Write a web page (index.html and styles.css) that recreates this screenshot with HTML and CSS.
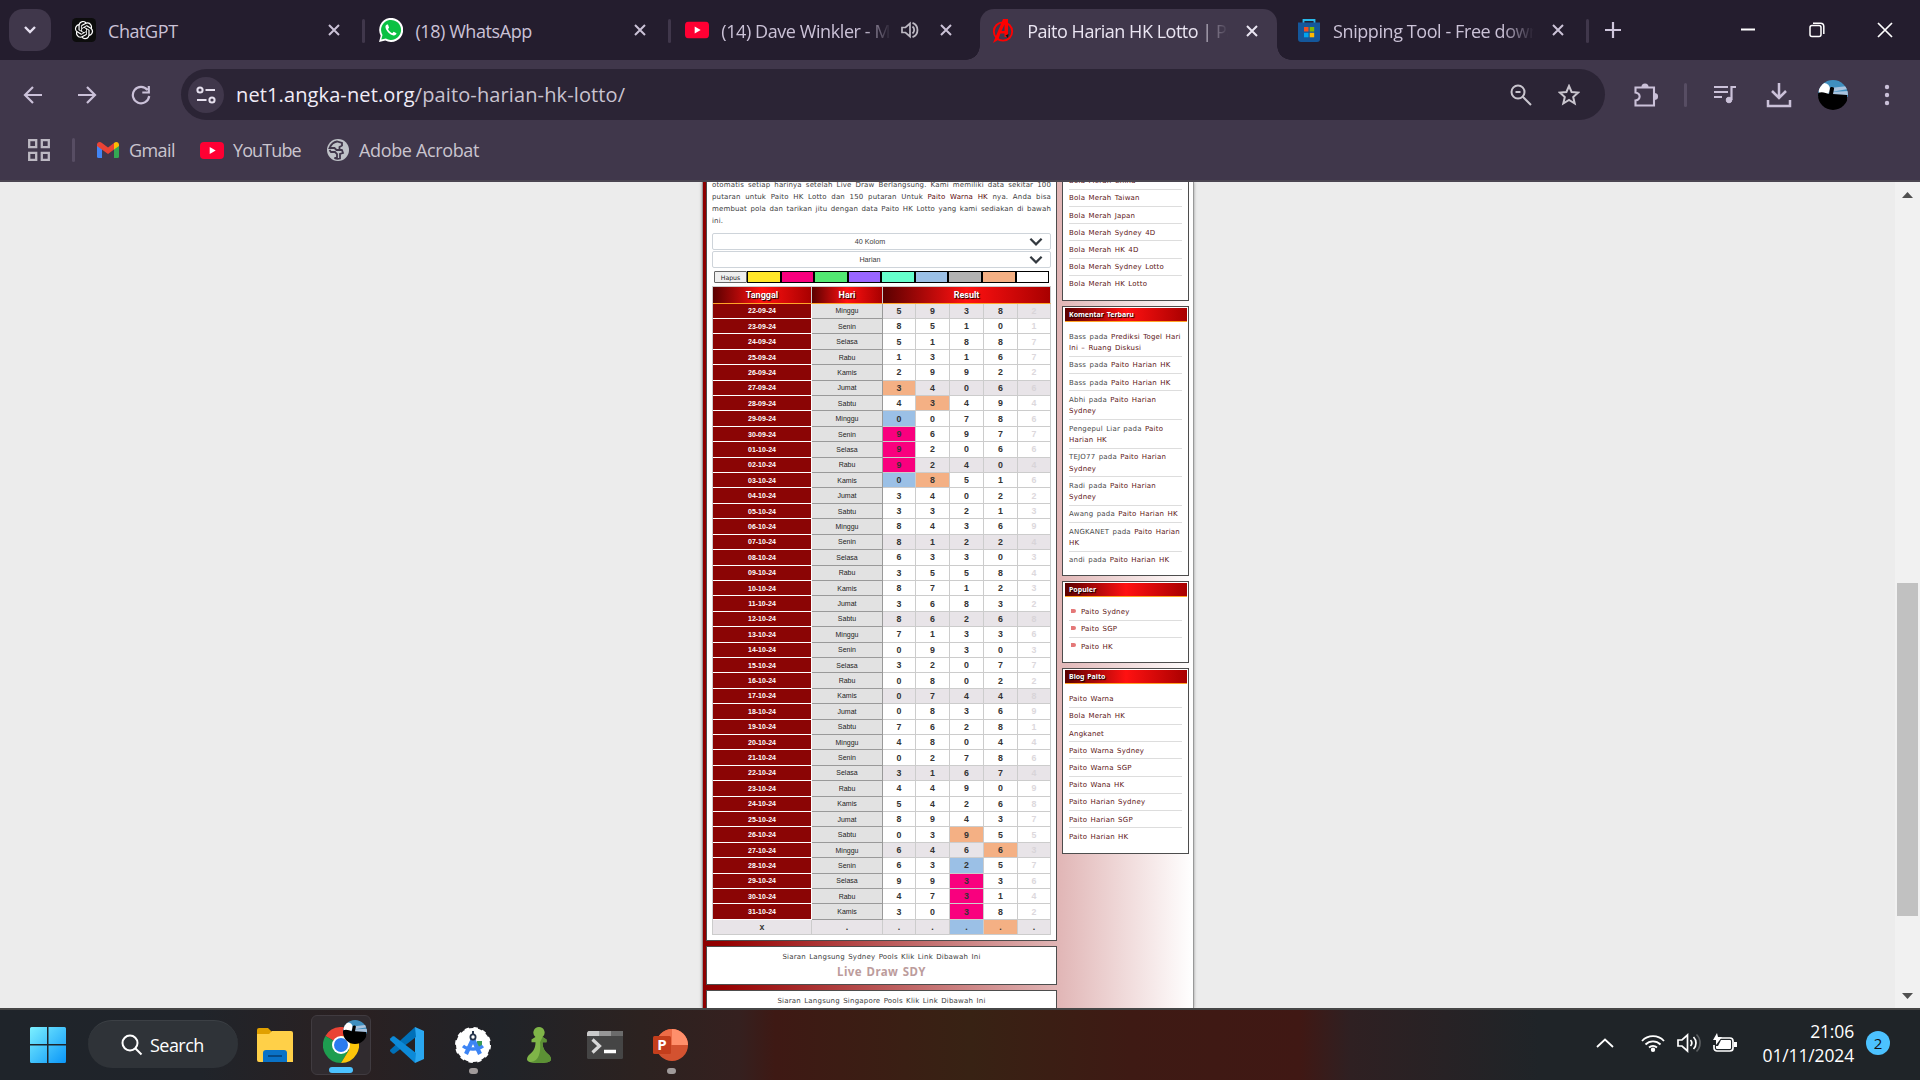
FILE: index.html
```html
<!DOCTYPE html>
<html lang="id">
<head>
<meta charset="utf-8">
<title>Paito Harian HK Lotto</title>
<link rel="stylesheet" href="styles.css">
</head>
<body>
<svg class="defs" width="0" height="0">
  <defs>
    <symbol id="x" viewBox="0 0 14 14"><path d="M2 2l10 10M12 2L2 12" fill="none" stroke="currentColor" stroke-width="2"/></symbol>
    <symbol id="yt" viewBox="0 0 24 17"><rect width="24" height="17" rx="4" fill="#ff0033"/><path d="M9.700 5v7l6-3.500z" fill="#fff"/></symbol>
    <symbol id="chev" viewBox="0 0 12 8"><path d="M1 1.500l5 5 5-5" fill="none" stroke="#343a40" stroke-width="2"/></symbol>
    <symbol id="avatar" viewBox="0 0 30 30"><clipPath id="ac"><circle cx="15" cy="15" r="15"/></clipPath><g clip-path="url(#ac)"><path fill="#3f8fbf" d="M0 0h30v17H0z"/><path fill="#a9c3de" d="M12 8l18-2v3l-17 3 17-1v4H10z"/><circle cx="6" cy="9" r="6" fill="#fff"/><path fill="#000" d="M0 13c4-2 8 0 11 1l1-6c1-2 5-1 4 1l-1 5 14 1v15H0z"/></g></symbol>
  </defs>
</svg>
<header class="browser">
  <div class="tabstrip">
    <div class="tabsearch"><svg width="14" height="10" viewBox="0 0 14 10"><path d="M2 2l5 5 5-5" fill="none" stroke="#e6e0f0" stroke-width="2.400"/></svg></div>
    <div class="tab">
      <svg class="ico" viewBox="0 0 24 24"><rect width="24" height="24" rx="4.500" fill="#0d0d0d"/><path transform="translate(2.900 2.900) scale(.76)" fill="#fff" d="M22.2819 9.8211a5.9847 5.9847 0 0 0-.5157-4.9108 6.0462 6.0462 0 0 0-6.5098-2.9A6.0651 6.0651 0 0 0 4.9807 4.1818a5.9847 5.9847 0 0 0-3.9977 2.9 6.0462 6.0462 0 0 0 .7427 7.0966 5.98 5.98 0 0 0 .511 4.9107 6.051 6.051 0 0 0 6.5146 2.9001A5.9847 5.9847 0 0 0 13.2599 24a6.0557 6.0557 0 0 0 5.7718-4.2058 5.9894 5.9894 0 0 0 3.9977-2.9001 6.0557 6.0557 0 0 0-.7475-7.0729zm-9.022 12.6081a4.4755 4.4755 0 0 1-2.8764-1.0408l.1419-.0804 4.7783-2.7582a.7948.7948 0 0 0 .3927-.6813v-6.7369l2.02 1.1686a.071.071 0 0 1 .038.052v5.5826a4.504 4.504 0 0 1-4.4945 4.4944zm-9.6607-4.1254a4.4708 4.4708 0 0 1-.5346-3.0137l.142.0852 4.783 2.7582a.7712.7712 0 0 0 .7806 0l5.8428-3.3685v2.3324a.0804.0804 0 0 1-.0332.0615L9.74 19.9502a4.4992 4.4992 0 0 1-6.1408-1.6464zM2.3408 7.8956a4.485 4.485 0 0 1 2.3655-1.9728V11.6a.7664.7664 0 0 0 .3879.6765l5.8144 3.3543-2.0201 1.1685a.0757.0757 0 0 1-.071 0l-4.8303-2.7865A4.504 4.504 0 0 1 2.3408 7.872zm16.5963 3.8558L13.1038 8.364 15.1192 7.2a.0757.0757 0 0 1 .071 0l4.8303 2.7913a4.4944 4.4944 0 0 1-.6765 8.1042v-5.6772a.79.79 0 0 0-.407-.667zm2.0107-3.0231l-.142-.0852-4.7735-2.7818a.7759.7759 0 0 0-.7854 0L9.409 9.2297V6.8974a.0662.0662 0 0 1 .0284-.0615l4.8303-2.7866a4.4992 4.4992 0 0 1 6.6802 4.66zM8.3065 12.863l-2.02-1.1638a.0804.0804 0 0 1-.038-.0567V6.0742a4.4992 4.4992 0 0 1 7.3757-3.4537l-.142.0805L8.704 5.459a.7948.7948 0 0 0-.3927.6813zm1.0976-2.3654l2.602-1.4998 2.6069 1.4998v2.9994l-2.5974 1.4997-2.6067-1.4997Z"/></svg>
      <span class="label">ChatGPT</span><svg class="close"><use href="#x"/></svg><i class="sep"></i>
    </div>
    <div class="tab">
      <svg class="ico" viewBox="0 0 24 24"><path d="M0 24l1.700-6.200A12 12 0 1 1 6.300 22.400z" fill="#fff"/><path d="M2.300 21.600l1.200-4.500a10 10 0 1 1 3.400 3.400z" fill="#0ac143"/><path d="M8 6.500c-1 .4-1.800 1.500-1.500 3 .6 3.400 4.300 7.300 8 7.900 1.500.2 2.800-.8 3-2.200l-2.900-1.500-1.300 1.500c-1.900-.8-3.400-2.200-4.300-4.200l1.100-1.300L9 6.600z" fill="#fff"/></svg>
      <span class="label">(18) WhatsApp</span><svg class="close"><use href="#x"/></svg><i class="sep"></i>
    </div>
    <div class="tab">
      <svg class="ico"><use href="#yt" width="24" height="17" y="3.500"/></svg>
      <span class="label fade">(14) Dave Winkler - Music</span>
      <svg class="sound" viewBox="0 0 18 18"><path d="M1 6.500h3.500L9 2.500v13l-4.500-4H1z" fill="none" stroke="#bdb9c3" stroke-width="1.700"/><path d="M11.500 5.500a4.500 4.500 0 0 1 0 7M11.500 1.800a7.700 7.700 0 0 1 0 14.400" fill="none" stroke="#bdb9c3" stroke-width="1.800"/></svg>
      <svg class="close"><use href="#x"/></svg>
    </div>
    <div class="tab active">
      <svg class="ico" viewBox="0 0 24 24"><circle cx="12" cy="12.500" r="9.200" fill="none" stroke="#f00" stroke-width="1.800"/><path d="M2 24L12 0h5v18h-3.500v-3.500h-4L7 21z" fill="#f00"/><path d="M10.500 12h3V5.500z" fill="#40374b"/><path d="M14.500 16.500l3-1.500-.5 4z" fill="#111"/></svg>
      <span class="label fade">Paito Harian HK Lotto | Paito</span><svg class="close"><use href="#x"/></svg>
    </div>
    <div class="tab">
      <svg class="ico" viewBox="0 0 24 24"><path d="M6.500 6V2h11v4" fill="none" stroke="#28b8ea" stroke-width="1.800"/><path d="M1 4.500h22V21a3 3 0 0 1-3 3H4a3 3 0 0 1-3-3z" fill="#14579b"/><path d="M7 9h4.500v4.500H7z" fill="#f25022"/><path d="M12.700 9h4.500v4.500h-4.500z" fill="#7fba00"/><path d="M7 14.800h4.500v4.500H7z" fill="#00a4ef"/><path d="M12.700 14.800h4.500v4.500h-4.500z" fill="#ffb900"/></svg>
      <span class="label fade">Snipping Tool - Free download</span><svg class="close"><use href="#x"/></svg><i class="sep"></i>
    </div>
    <svg class="newtab" viewBox="0 0 16 16"><path d="M8 0v16M0 8h16" stroke="#cfc6dc" stroke-width="2.200"/></svg>
    <div class="winctl">
      <svg width="16" height="16" viewBox="0 0 16 16"><path d="M1 7.500h14" stroke="#fff" stroke-width="2"/></svg>
      <svg width="16" height="16" viewBox="0 0 16 16" fill="none" stroke="#fff" stroke-width="1.500"><rect x="1" y="3.500" width="11" height="11" rx="2"/><path d="M4 1.200h7.500a3.300 3.300 0 0 1 3.300 3.300V12"/></svg>
      <svg width="16" height="16" viewBox="0 0 16 16"><path d="M1 1l14 14M15 1L1 15" stroke="#fff" stroke-width="1.700"/></svg>
    </div>
  </div>
  <div class="toolbar">
    <svg class="nav" viewBox="0 0 20 20"><path d="M19 10H2M10 2l-8 8 8 8"/></svg>
    <svg class="nav" viewBox="0 0 20 20"><path d="M1 10h17M10 2l8 8-8 8"/></svg>
    <svg class="nav" viewBox="0 0 20 20"><path d="M16.500 5A8.200 8.200 0 1 0 18.200 11M17.800 1v6.500h-6.500"/></svg>
    <div class="omnibox">
      <div class="siteinfo"><svg width="20" height="20" viewBox="0 0 20 20" fill="none" stroke="#e6e0ee" stroke-width="2"><circle cx="4" cy="5" r="2.600"/><path d="M9.500 5H19M1 15h9.500"/><circle cx="16" cy="15" r="2.600"/></svg></div>
      <span class="url"><b>net1.angka-net.org</b>/paito-harian-hk-lotto/</span>
      <svg class="oi" viewBox="0 0 22 22"><circle cx="8" cy="8" r="6.500"/><path d="M12.800 12.800L21 21M5.500 8h5"/></svg>
      <svg class="oi" viewBox="0 0 22 22"><path d="M11 2l2.600 6 6.600.6-5 4.400 1.500 6.500L11 16l-5.700 3.500L6.800 13l-5-4.400L8.400 8z"/></svg>
    </div>
    <div class="actions">
      <svg width="24" height="24" viewBox="0 0 24 24" fill="none" stroke="#cbc1d9" stroke-width="2.100"><path d="M1.500 4.500H20v18H1.500v-5c5.500-1 5.500-7 0-8z"/><path d="M8.500 4a2.500 2.500 0 0 1 5 0M20.500 11a2.500 2.500 0 0 1 0 5" fill="#cbc1d9"/></svg>
      <i class="sep"></i>
      <svg width="24" height="24" viewBox="0 0 24 24" fill="none" stroke="#cbc1d9" stroke-width="2.200"><path d="M1 4h14M1 9h14M1 14h8M23 4h-4.500v13"/><circle cx="16" cy="17" r="2.800" fill="#cbc1d9" stroke-width="1"/></svg>
      <svg class="dl" width="26" height="26" viewBox="0 0 26 26" fill="none" stroke="#cbc1d9" stroke-width="2.500"><path d="M13 1v14M6 9l7 7 7-7M2 18v6h22v-6"/></svg>
      <svg width="30" height="30"><use href="#avatar"/></svg>
      <svg class="dots" width="6" height="24" viewBox="0 0 6 24" fill="#cbc1d9"><circle cx="3" cy="4" r="2.200"/><circle cx="3" cy="12" r="2.200"/><circle cx="3" cy="20" r="2.200"/></svg>
    </div>
  </div>
  <nav class="bookmarks">
    <svg width="22" height="22" viewBox="0 0 22 22" fill="none" stroke="#bdb9c3" stroke-width="2.300"><path d="M1.200 1.200h7v7h-7zM13.800 1.200h7v7h-7zM1.200 13.800h7v7h-7zM13.800 13.800h7v7h-7z"/></svg>
    <i class="sep"></i>
    <a class="bm gmail"><svg width="22" height="16" viewBox="0 0 22 16"><path d="M0 2v12.500A1.500 1.500 0 0 0 1.500 16H5V6z" fill="#4285f4"/><path d="M17 6v10h3.500a1.500 1.500 0 0 0 1.500-1.500V2z" fill="#34a853"/><path d="M0 3c0-3 3-3.700 5-2l6 4.500L17 1v6.500L11 12 0 4z" fill="#ea4335"/><path d="M17 1c2-1.700 5-1 5 2v1l-5 3.500z" fill="#fbbc04"/></svg>Gmail</a>
    <a class="bm you"><svg width="24" height="17"><use href="#yt"/></svg>YouTube</a>
    <a class="bm adobe"><svg width="22" height="22" viewBox="0 0 22 22"><circle cx="11" cy="11" r="11" fill="#bfc2c8"/><path d="M10 2.500c-3 .5-6 3-7.500 6.500h5l2 2h3V8l2.500-1.500V4zM12 10.500l3 .5 1 3-3 1v4.500c-2 .5-4 .3-5.500-.5H10v-4l-2-2H4l-1.500-2" fill="none" stroke="#40374b" stroke-width="1.800"/></svg>Adobe Acrobat</a>
  </nav>
</header>
<main class="viewport">
  <div class="page">
    <div class="content">
      <section class="panel main">
        <div class="intro">
          <p>otomatis setiap harinya setelah Live Draw Berlangsung. Kami memiliki data sekitar 100</p>
          <p>putaran untuk Paito HK Lotto dan 150 putaran Untuk <a>Paito Warna HK</a> nya. Anda bisa</p>
          <p>membuat pola dan tarikan jitu dengan data Paito HK Lotto yang kami sediakan di bawah</p>
          <p class="last">ini.</p>
        </div>
        <div class="select"><span>40 Kolom</span><svg width="14" height="9"><use href="#chev"/></svg></div>
        <div class="select"><span>Harian</span><svg width="14" height="9"><use href="#chev"/></svg></div>
        <div class="palette"><button>Hapus</button><i class="yellow"></i><i class="pink"></i><i class="green"></i><i class="purple"></i><i class="mint"></i><i class="blue"></i><i class="gray"></i><i class="orange"></i><i></i></div>
        <table class="draws">
          <thead><tr><th>Tanggal</th><th>Hari</th><th>Result</th></tr></thead>
          <tbody>
            <tr class="alt"><th>22-09-24</th><td>Minggu</td><td>5</td><td>9</td><td>3</td><td>8</td><td>2</td></tr>
            <tr><th>23-09-24</th><td>Senin</td><td>8</td><td>5</td><td>1</td><td>0</td><td>1</td></tr>
            <tr><th>24-09-24</th><td>Selasa</td><td>5</td><td>1</td><td>8</td><td>8</td><td>7</td></tr>
            <tr><th>25-09-24</th><td>Rabu</td><td>1</td><td>3</td><td>1</td><td>6</td><td>7</td></tr>
            <tr><th>26-09-24</th><td>Kamis</td><td>2</td><td>9</td><td>9</td><td>2</td><td>2</td></tr>
            <tr class="alt"><th>27-09-24</th><td>Jumat</td><td class="orange">3</td><td>4</td><td>0</td><td>6</td><td>6</td></tr>
            <tr><th>28-09-24</th><td>Sabtu</td><td>4</td><td class="orange">3</td><td>4</td><td>9</td><td>4</td></tr>
            <tr><th>29-09-24</th><td>Minggu</td><td class="blue">0</td><td>0</td><td>7</td><td>8</td><td>6</td></tr>
            <tr><th>30-09-24</th><td>Senin</td><td class="pink">9</td><td>6</td><td>9</td><td>7</td><td>7</td></tr>
            <tr><th>01-10-24</th><td>Selasa</td><td class="pink">9</td><td>2</td><td>0</td><td>6</td><td>6</td></tr>
            <tr class="alt"><th>02-10-24</th><td>Rabu</td><td class="pink">9</td><td>2</td><td>4</td><td>0</td><td>4</td></tr>
            <tr><th>03-10-24</th><td>Kamis</td><td class="blue">0</td><td class="orange">8</td><td>5</td><td>1</td><td>6</td></tr>
            <tr><th>04-10-24</th><td>Jumat</td><td>3</td><td>4</td><td>0</td><td>2</td><td>2</td></tr>
            <tr><th>05-10-24</th><td>Sabtu</td><td>3</td><td>3</td><td>2</td><td>1</td><td>3</td></tr>
            <tr><th>06-10-24</th><td>Minggu</td><td>8</td><td>4</td><td>3</td><td>6</td><td>9</td></tr>
            <tr class="alt"><th>07-10-24</th><td>Senin</td><td>8</td><td>1</td><td>2</td><td>2</td><td>4</td></tr>
            <tr><th>08-10-24</th><td>Selasa</td><td>6</td><td>3</td><td>3</td><td>0</td><td>3</td></tr>
            <tr><th>09-10-24</th><td>Rabu</td><td>3</td><td>5</td><td>5</td><td>8</td><td>4</td></tr>
            <tr><th>10-10-24</th><td>Kamis</td><td>8</td><td>7</td><td>1</td><td>2</td><td>3</td></tr>
            <tr><th>11-10-24</th><td>Jumat</td><td>3</td><td>6</td><td>8</td><td>3</td><td>2</td></tr>
            <tr class="alt"><th>12-10-24</th><td>Sabtu</td><td>8</td><td>6</td><td>2</td><td>6</td><td>8</td></tr>
            <tr><th>13-10-24</th><td>Minggu</td><td>7</td><td>1</td><td>3</td><td>3</td><td>6</td></tr>
            <tr><th>14-10-24</th><td>Senin</td><td>0</td><td>9</td><td>3</td><td>0</td><td>3</td></tr>
            <tr><th>15-10-24</th><td>Selasa</td><td>3</td><td>2</td><td>0</td><td>7</td><td>7</td></tr>
            <tr><th>16-10-24</th><td>Rabu</td><td>0</td><td>8</td><td>0</td><td>2</td><td>2</td></tr>
            <tr class="alt"><th>17-10-24</th><td>Kamis</td><td>0</td><td>7</td><td>4</td><td>4</td><td>8</td></tr>
            <tr><th>18-10-24</th><td>Jumat</td><td>0</td><td>8</td><td>3</td><td>6</td><td>9</td></tr>
            <tr><th>19-10-24</th><td>Sabtu</td><td>7</td><td>6</td><td>2</td><td>8</td><td>1</td></tr>
            <tr><th>20-10-24</th><td>Minggu</td><td>4</td><td>8</td><td>0</td><td>4</td><td>4</td></tr>
            <tr><th>21-10-24</th><td>Senin</td><td>0</td><td>2</td><td>7</td><td>8</td><td>6</td></tr>
            <tr class="alt"><th>22-10-24</th><td>Selasa</td><td>3</td><td>1</td><td>6</td><td>7</td><td>4</td></tr>
            <tr><th>23-10-24</th><td>Rabu</td><td>4</td><td>4</td><td>9</td><td>0</td><td>9</td></tr>
            <tr><th>24-10-24</th><td>Kamis</td><td>5</td><td>4</td><td>2</td><td>6</td><td>8</td></tr>
            <tr><th>25-10-24</th><td>Jumat</td><td>8</td><td>9</td><td>4</td><td>3</td><td>7</td></tr>
            <tr><th>26-10-24</th><td>Sabtu</td><td>0</td><td>3</td><td class="orange">9</td><td>5</td><td>5</td></tr>
            <tr class="alt"><th>27-10-24</th><td>Minggu</td><td>6</td><td>4</td><td>6</td><td class="orange">6</td><td>3</td></tr>
            <tr><th>28-10-24</th><td>Senin</td><td>6</td><td>3</td><td class="blue">2</td><td>5</td><td>7</td></tr>
            <tr><th>29-10-24</th><td>Selasa</td><td>9</td><td>9</td><td class="pink">3</td><td>3</td><td>6</td></tr>
            <tr><th>30-10-24</th><td>Rabu</td><td>4</td><td>7</td><td class="pink">3</td><td>1</td><td>4</td></tr>
            <tr><th>31-10-24</th><td>Kamis</td><td>3</td><td>0</td><td class="pink">3</td><td>8</td><td>2</td></tr>
            <tr class="alt next"><td>x</td><td>.</td><td>.</td><td>.</td><td class="blue">.</td><td class="orange">.</td><td>.</td></tr>
          </tbody>
        </table>
      </section>
      <section class="panel live"><p>Siaran Langsung Sydney Pools Klik Link Dibawah Ini</p><a>Live Draw SDY</a></section>
      <section class="panel live"><p>Siaran Langsung Singapore Pools Klik Link Dibawah Ini</p></section>
    </div>
    <aside class="sidebar">
      <section class="panel box first">
        <ul><li>Bola Merah China</li><li>Bola Merah Taiwan</li><li>Bola Merah Japan</li><li>Bola Merah Sydney 4D</li><li>Bola Merah HK 4D</li><li>Bola Merah Sydney Lotto</li><li>Bola Merah HK Lotto</li></ul>
      </section>
      <section class="panel box comments"><h3>Komentar Terbaru</h3>
        <ul><li><s>Bass pada</s> Prediksi Togel Hari<br>Ini – Ruang Diskusi</li><li><s>Bass pada</s> Paito Harian HK</li><li><s>Bass pada</s> Paito Harian HK</li><li><s>Abhi pada</s> Paito Harian<br>Sydney</li><li><s>Pengepul Liar pada</s> Paito<br>Harian HK</li><li><s>TEJO77 pada</s> Paito Harian<br>Sydney</li><li><s>Radi pada</s> Paito Harian<br>Sydney</li><li><s>Awang pada</s> Paito Harian HK</li><li><s>ANGKANET pada</s> Paito Harian<br>HK</li><li><s>andi pada</s> Paito Harian HK</li></ul>
      </section>
      <section class="panel box popular"><h3>Populer</h3>
        <ul><li>Paito Sydney</li><li>Paito SGP</li><li>Paito HK</li></ul>
      </section>
      <section class="panel box blog"><h3>Blog Paito</h3>
        <ul><li>Paito Warna</li><li>Bola Merah HK</li><li>Angkanet</li><li>Paito Warna Sydney</li><li>Paito Warna SGP</li><li>Paito Wana HK</li><li>Paito Harian Sydney</li><li>Paito Harian SGP</li><li>Paito Harian HK</li></ul>
      </section>
    </aside>
  </div>
  <div class="scrollbar">
    <svg width="11" height="6" viewBox="0 0 11 6"><path d="M5.500 0L11 6H0z" fill="#505050"/></svg>
    <i></i>
    <svg width="11" height="6" viewBox="0 0 11 6"><path d="M0 0h11L5.500 6z" fill="#505050"/></svg>
  </div>
</main>
<footer class="taskbar">
  <div class="apps">
    <svg class="start" width="36" height="36" viewBox="0 0 36 36"><defs><linearGradient id="wg" gradientUnits="userSpaceOnUse" x1="0" y1="0" x2="36" y2="36"><stop offset="0" stop-color="#7cf0ff"/><stop offset="1" stop-color="#0a96f8"/></linearGradient></defs><path d="M1.500 0H17v17H0V1.500A1.500 1.500 0 0 1 1.500 0zM18.500 0h16A1.500 1.500 0 0 1 36 1.500V17H18.500zM0 18.500h17V36H1.500A1.500 1.500 0 0 1 0 34.500zM18.500 18.500H36v16a1.500 1.500 0 0 1-1.500 1.500h-16z" fill="url(#wg)"/></svg>
    <div class="search"><svg width="22" height="22" viewBox="0 0 22 22" fill="none" stroke="#fff" stroke-width="2"><circle cx="9" cy="9" r="7.500"/><path d="M14.500 14.500l6 6"/></svg>Search</div>
    <div class="app"><svg width="36" height="34" viewBox="0 0 36 34"><path d="M0 2a2 2 0 0 1 2-2h9l4 4v6H0z" fill="#e0a000"/><path d="M0 6h12l3-3h19a2 2 0 0 1 2 2v29H2a2 2 0 0 1-2-2z" fill="#ffd048"/><path d="M6 34V25a3 3 0 0 1 3-3h18a3 3 0 0 1 3 3v9z" fill="#0a72c7"/><path d="M11 28h14" stroke="#064a86" stroke-width="2"/></svg></div>
    <div class="app current running"><svg width="36" height="36" viewBox="0 0 36 36"><path d="M18 18L2.400 9A18 18 0 0 1 33.600 9z" fill="#ea4335"/><path d="M18 18L2.400 9A18 18 0 0 0 18 36l8-13z" fill="#1e9d50"/><path d="M18 9h15.600A18 18 0 0 1 18 36l8-13z" fill="#fdc60a"/><circle cx="18" cy="18" r="9" fill="#fff"/><circle cx="18" cy="18" r="7" fill="#2a7bf0"/></svg><svg class="badge" width="24" height="24" viewBox="0 0 24 24"><use href="#avatar" width="24" height="24"/></svg></div>
    <div class="app"><svg width="36" height="36" viewBox="0 0 36 36"><path d="M26 0l9 4v28l-9 4z" fill="#2aa7f0"/><path d="M26 0L1.500 22.500a1.500 1.500 0 0 0 0 2.200l2 1.800c.7.500 1.400.4 2 0L27 10z" fill="#0070b8"/><path d="M26 36L1.500 13.500a1.500 1.500 0 0 1 0-2.200l2-1.800c.7-.5 1.400-.4 2 0L27 26z" fill="#0d8ad8"/></svg></div>
    <div class="app running"><svg width="36" height="36" viewBox="0 0 36 36"><circle cx="18" cy="18" r="17" fill="#fff"/><circle cx="18" cy="18" r="17" fill="none" stroke="#fff" stroke-width="2" stroke-dasharray="4.450 4.450"/><path d="M22 14h5v7h-5z" fill="#3a9b57"/><path d="M18 12L11 27M18 12l7 15" stroke="#3d85f5" stroke-width="4.200"/><path d="M8 19c5 4 15 4 20 0" fill="none" stroke="#3d85f5" stroke-width="3.400"/><circle cx="18" cy="10" r="2.600" fill="#fff" stroke="#27364d" stroke-width="1.800"/><path d="M18 4v3" stroke="#27364d" stroke-width="2"/></svg></div>
    <div class="app"><svg width="24" height="36" viewBox="0 0 24 36"><path d="M12 0a5.600 5.600 0 0 1 3.600 9.900l3.900 2.600v2.700h-4c0 5.500 2 9 6 12.300 1.500 1.300 2.500 3 2.500 5 0 2.500-5 3.500-12 3.500S0 35 0 32.500c0-2 1-3.700 2.500-5 4-3.300 6-6.800 6-12.300h-4v-2.700l3.900-2.600A5.600 5.600 0 0 1 12 0z" fill="#7fb548"/><path d="M15.600 9.900l3.900 2.600v2.700h-4c0 5.500 2 9 6 12.300 1.500 1.300 2.500 3 2.500 5 0 2.500-5 3.500-12 3.500-3 0-6-.3-8-1 8-1 10-10 9-19.800z" fill="#5c9135"/></svg></div>
    <div class="app"><svg width="36" height="28" viewBox="0 0 36 28"><rect width="36" height="28" rx="1.500" fill="#454545"/><path d="M1.500 0H12v5H0V1.500z" fill="#c9c9c9"/><path d="M12 0h12v5H12z" fill="#979797"/><path d="M24 0h12v5H24z" fill="#6b6b6b"/><path d="M5.500 8.500l7 6.500-7 6.500" fill="none" stroke="#d8d8d8" stroke-width="3.200"/><path d="M17 20.500h12" stroke="#fff" stroke-width="3.500"/></svg></div>
    <div class="app running"><svg width="36" height="34" viewBox="0 0 36 34"><circle cx="19" cy="17" r="16" fill="#d35230"/><path d="M19 1a16 16 0 0 1 16 16H19z" fill="#ff8f6b"/><path d="M19 1A16 16 0 0 0 3 17h16z" fill="#ed6c47"/><rect y="8" width="18" height="18" rx="1.500" fill="#c43e1c"/><text x="9" y="22" text-anchor="middle" class="ppt">P</text></svg></div>
  </div>
  <div class="tray">
    <svg width="18" height="10" viewBox="0 0 18 10"><path d="M1 9l8-7.500L17 9" fill="none" stroke="#fff" stroke-width="1.800"/></svg>
    <svg width="24" height="18" viewBox="0 0 24 18" fill="none" stroke="#fff" stroke-width="1.800"><path d="M1 7a15 15 0 0 1 22 0M4.500 10.500a10.500 10.500 0 0 1 15 0M8 13.500a6 6 0 0 1 8 0"/><circle cx="12" cy="15.800" r="1.300" fill="#fff"/></svg>
    <svg width="24" height="20" viewBox="0 0 24 20" fill="none" stroke="#fff" stroke-width="1.700"><path d="M1 7h4l5.500-5v16L5 13H1zM13.500 7a4.500 4.500 0 0 1 0 6M16.500 4a8.500 8.500 0 0 1 0 12"/><path d="M19.500 1.500a12 12 0 0 1 0 17" stroke="#5a5d60"/></svg>
    <svg width="24" height="20" viewBox="0 0 24 20"><path d="M7 5h10a3 3 0 0 1 3 3v7a3 3 0 0 1-3 3H4a3 3 0 0 1-3-3v-3" fill="none" stroke="#fff" stroke-width="1.700"/><path d="M8 7h9a1 1 0 0 1 1 1v7a1 1 0 0 1-1 1H4a1 1 0 0 1-1-1v-2h2zM21 9h3v5h-3zM4 0L0 7h3v5l6-8H5z" fill="#fff"/></svg>
    <div class="clock"><span>21:06</span><span>01/11/2024</span></div>
    <b class="count">2</b>
  </div>
</footer>
</body>
</html>
```
FILE: styles.css
```css
* { box-sizing: border-box; margin: 0; padding: 0; }
body { width: 1920px; height: 1080px; overflow: hidden; display: flex; flex-direction: column; background: #ececec; font-family: "Open Sans", "Noto Sans", sans-serif; }
svg { display: block; flex: none; }
.defs { position: absolute; }

/* browser frame */
.browser { flex: none; height: 182px; background: #40374b; border-bottom: 2px solid #4a4550; }
.tabstrip { height: 60px; background: #241d2e; display: flex; align-items: center; padding-left: 9px; }
.tabsearch { width: 42px; height: 42px; border-radius: 14px; background: #40374b; display: flex; align-items: center; justify-content: center; margin-right: 7.500px; }
.tab { width: 305.900px; height: 60px; display: flex; align-items: center; padding: 0 23px 0 15px; color: #cbc2d7; position: relative; flex: none; }
.tabsearch + .tab { padding-left: 13.500px; }
.ico { width: 24px; height: 24px; margin-right: 12px; }
.label { flex: 1; min-width: 0; overflow: hidden; white-space: nowrap; font-size: 18px; letter-spacing: -0.420px; padding-top: 1px; }
.fade { -webkit-mask-image: linear-gradient(90deg, #000 84%, transparent); mask-image: linear-gradient(90deg, #000 84%, transparent); }
.close { width: 14px; height: 14px; margin-left: 17px; }
.sound { width: 18px; height: 18px; margin-left: 10px; }
.sound + .close { margin-left: 20px; }
.tab .sep { position: absolute; right: -1px; top: 19px; width: 3px; height: 24px; border-radius: 2px; background: #40374b; }
.tab.active { color: #eae5f2; height: 51px; align-self: flex-end; z-index: 1; }
.tab.active::before { content: ""; position: absolute; z-index: -1; left: 4px; right: 5px; top: 0; bottom: 0; border-radius: 14px 14px 0 0; background: #40374b; }
.tab.active::after { content: ""; position: absolute; left: -10px; right: -9px; bottom: 0; height: 14px; background: radial-gradient(circle at 0 0, transparent 13.500px, #40374b 14px) left / 14px 14px no-repeat, radial-gradient(circle at 100% 0, transparent 13.500px, #40374b 14px) right / 14px 14px no-repeat; }
.tab.active > * { transform: translateY(-4px); }
.tab.active .label { letter-spacing: -0.480px; }
.newtab { width: 16px; height: 16px; margin-left: 17px; }
.winctl { margin-left: auto; display: flex; gap: 52.500px; padding-right: 27px; }
.toolbar { height: 60px; padding: 9px 30px 0 23px; display: flex; align-items: center; }
.nav { width: 20px; height: 20px; margin-right: 34px; fill: none; stroke: #cbc1d9; stroke-width: 2.200; }
.nav:nth-child(3) { margin-right: 30px; }
.omnibox { width: 1424px; height: 51px; border-radius: 26px; background: #2b2435; display: flex; align-items: center; padding: 0 25px 0 7px; flex: none; }
.siteinfo { width: 36px; height: 36px; border-radius: 50%; background: #40374b; display: flex; align-items: center; justify-content: center; margin-right: 12px; }
.url { flex: 1; font-size: 20px; color: #c9c3d0; letter-spacing: 0.120px; }
.url b { font-weight: 400; color: #f1ecf7; }
.oi { width: 22px; height: 22px; margin-left: 26px; fill: none; stroke: #c9c5ce; stroke-width: 2; }
.actions { flex: 1; display: flex; align-items: center; gap: 26px; padding-left: 29px; }
.actions .sep { width: 3px; height: 24px; background: #574d63; border-radius: 2px; }
.actions .dl { margin-left: 3px; }
.actions .dots { margin-left: 10px; }
.bookmarks { height: 60px; display: flex; align-items: center; padding-left: 28px; color: #cac5cf; font-size: 18px; letter-spacing: -0.350px; }
.bookmarks .sep { width: 3px; height: 24px; background: #574d63; border-radius: 2px; margin: 0 22px 0 22px; }
.bm { display: flex; align-items: center; gap: 10px; }
.gmail { width: 103px; letter-spacing: -0.600px; }
.you { width: 127px; gap: 9px; letter-spacing: -0.900px; }

/* page */
.viewport { height: 826px; display: flex; overflow: hidden; padding-left: 702px; flex: none; }
.page { width: 492px; margin-right: auto; display: flex; gap: 5px; padding-left: 3px; border: solid #999; border-width: 0 1px; box-shadow: 0 0 3px #999; background: linear-gradient(90deg, #8b0000 0%, #960000 4%, #fff); font: 7px/12px "DejaVu Sans", sans-serif; color: #3c3c3c; word-spacing: 0.900px; letter-spacing: 0.200px; height: 826px; }
.panel { background: #fff; border: 1px solid #4d4d4d; }
.content { width: 351px; }
.main { height: 759px; border-top: 0; padding: 0 5px; margin-bottom: 5px; overflow: hidden; }
.intro { margin-top: -3px; height: 54px; }
.intro p { height: 12px; text-align: justify; text-align-last: justify; white-space: nowrap; letter-spacing: 0.150px; word-spacing: 0; }
.intro p.last { text-align-last: left; }
.intro a { color: #5a0808; }
.select { height: 17px; border: 1px solid #ced4da; border-radius: 2px; margin-bottom: 1px; display: flex; align-items: center; font: 7.200px "Liberation Sans", Arial, sans-serif; letter-spacing: 0; word-spacing: 0; padding-right: 7px; }
.select span { flex: 1; text-align: center; padding-right: 2px; }
.palette { display: flex; height: 12px; margin: 3px 2px 3px; }
.palette button { width: 33px; border: 1px solid #666; background: #efefef; border-radius: 1px; font: 6.200px "DejaVu Sans", sans-serif; color: #222; }
.palette i { flex: 1; border: 1px solid #000; background: #fff; }
.palette .yellow { background: #ffe629; }
.pink { background: #f9007e !important; }
.palette .green { background: #52e872; }
.palette .purple { background: #9966ff; }
.palette .mint { background: #66ffcc; }
.blue { background: #9bc0e6 !important; }
.palette .gray { background: #b2b2b2; }
.orange { background: #f4b084 !important; }
.draws, .draws thead, .draws tbody { display: block; }
.draws { border: 1px solid #ccc; border-width: 1px 0 0 1px; font: 7px "Liberation Sans", Arial, sans-serif; letter-spacing: 0; word-spacing: 0; }
.draws tr { display: grid; grid-template-columns: 99px 71px 33px 34px 34px 34px 1fr; height: 15.410px; }
.draws tr > * { display: flex; align-items: center; justify-content: center; border: solid #ccc; border-width: 0 1px 1px 0; color: #222; }
.draws thead tr { height: 16.600px; grid-template-columns: 99px 71px 1fr; }
.draws thead th { font: 700 9px Roboto, sans-serif; color: #fff; background: linear-gradient(90deg, #5a0000, #ff1111 50%, #a80000); border-bottom-color: #ffa526; text-shadow: 1px 1px 1px #000; }
.draws tbody th { background: #8b0505; color: #fff; border-color: #fff; }
.draws td:nth-child(2) { background: #e2e2e2; border-color: #999; }
.draws td:nth-child(n+3) { font-weight: 700; font-size: 8.800px; color: #333; }
.draws tr td:last-child { color: #dcd8dc; }
.draws .alt td:nth-child(n+3) { background: #e8e4e8; }
.draws .alt td:last-child { color: #d8d4d8; }
.draws .next td, .draws .next td:nth-child(2), .draws .next td:last-child { background: #e8e4e8; border-color: #ccc; color: #333; font-weight: 700; font-size: 8.800px; }
.live { height: 39px; margin-bottom: 5px; text-align: center; padding-top: 4px; }
.live a { display: block; font: 700 11.500px/17px "Noto Sans", sans-serif; color: #bc9c9c; letter-spacing: 0.450px; }

.sidebar { width: 127px; }
.box { margin-bottom: 5px; padding: 1px; overflow: hidden; }
.box h3 { height: 14px; margin-left: 1px; border-bottom: 1px solid #ffa526; background: linear-gradient(90deg, #5a0000, #ff1111 50%, #a80000); color: #fff; font: 700 7px/13px "Noto Sans", "DejaVu Sans", sans-serif; letter-spacing: 0; text-shadow: 1px 1px 1px #000; padding-left: 4px; }
.box ul { list-style: none; padding: 6px 5px 0; }
.box li { line-height: 11.400px; padding: 3.600px 0 1.200px; min-height: 17.220px; border-bottom: 1px solid #ddd; color: #5c1414; white-space: nowrap; }
.box li:last-child { border-bottom-color: transparent; }
.box s { text-decoration: none; color: #4a4a4a; }
.first { height: 119px; border-top: 0; padding: 0; }
.first ul { margin-top: -15.500px; padding-left: 6px; padding-right: 6px; }
.comments { height: 270px; }
.comments ul { padding-top: 6.300px; }
.popular { height: 82px; }
.popular ul, .blog ul { padding-top: 6.500px; }
.popular li { display: flex; align-items: center; }
.popular li::before { content: ""; width: 5px; height: 4px; margin: -4px 5px 0 2px; background: #e47878; border-radius: 0 2px 2px 0; }
.blog { height: 186px; }

.scrollbar { width: 25px; background: #f1f1f1; display: flex; flex-direction: column; align-items: center; padding: 10px 0 9px; }
.scrollbar i { width: 21px; height: 333px; margin: 385px 0 auto; background: #c1c1c1; }

/* taskbar */
.taskbar { height: 72px; border-top: 2px solid #464646; flex: none; display: flex; justify-content: space-between; background: linear-gradient(90deg, #1f242a 0, #20242a 200px, #2a2021 350px, #202328 500px, #2c2220 640px, #35201f 740px, #3e1914 775px, #382214 970px, #3e1a14 1130px, #401814 1300px, #2f2022 1350px, #1f2428 1540px); }
.apps { display: flex; align-items: center; padding-left: 30px; }
.start { margin-right: 22px; margin-top: -1px; }
.search { width: 150px; height: 48px; margin: -2px 7px 0 0; border-radius: 24px; background: #2f3338; border-top: 1px solid #3c4045; color: #fff; font-size: 18px; letter-spacing: -0.550px; display: flex; align-items: center; gap: 7px; padding-left: 33px; }
.app { width: 60px; height: 60px; margin-right: 6px; display: flex; align-items: center; justify-content: center; position: relative; }
.current { background: #302b2f; border: 1px solid #403b40; border-radius: 6px; }
.running::after { content: ""; position: absolute; bottom: 1px; width: 9px; height: 6px; border-radius: 3px; background: #a09a9a; }
.current::after { width: 24px; background: #4cc2ff; }
.badge { position: absolute; right: 3px; top: 4px; }
.ppt { font: 700 15px "Open Sans", sans-serif; fill: #fff; }
.tray { display: flex; align-items: center; padding: 0 30px 4px 0; }
.tray svg { margin-right: 12px; }
.tray svg:first-child { margin-right: 27px; }
.clock { width: 105px; display: flex; flex-direction: column; align-items: flex-end; color: #fff; font-size: 17.500px; line-height: 24px; letter-spacing: -0.150px; }
.count { width: 24px; height: 24px; margin-left: 12px; border-radius: 50%; background: #4cc2ff; color: #111; font: 400 15px/24px "Open Sans", sans-serif; text-align: center; }
```
